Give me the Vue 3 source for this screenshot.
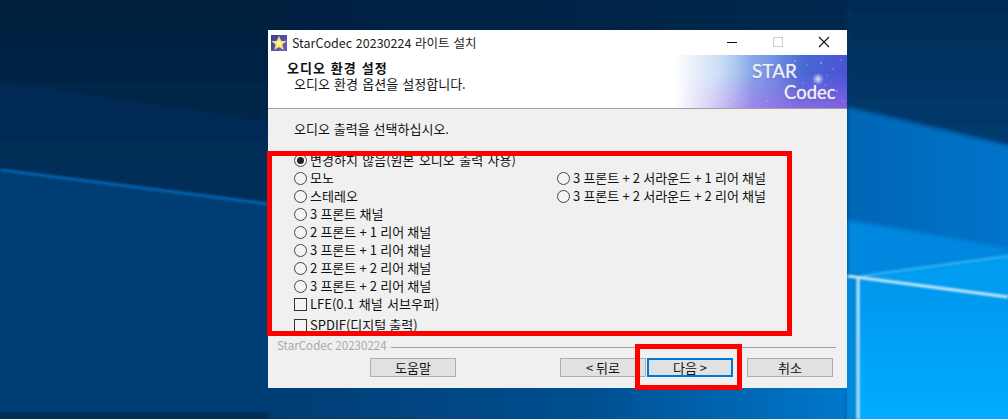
<template>
  <div class="desktop">
    <svg class="wallpaper" width="1008" height="419" viewBox="0 0 1008 419">
      <defs>
        <linearGradient id="leftTop" x1="0" y1="0" x2="0" y2="1">
          <stop offset="0" stop-color="#00203f" />
          <stop offset="1" stop-color="#002749" />
        </linearGradient>
        <linearGradient id="leftMid" x1="0" y1="0" x2="0" y2="1">
          <stop offset="0" stop-color="#002b54" />
          <stop offset="1" stop-color="#003564" />
        </linearGradient>
        <linearGradient id="rightTop" x1="0" y1="0" x2="0" y2="1">
          <stop offset="0" stop-color="#002a52" />
          <stop offset="1" stop-color="#005da8" />
        </linearGradient>
        <linearGradient id="rightMid" x1="0" y1="0" x2="1" y2="0">
          <stop offset="0" stop-color="#0066b4" />
          <stop offset="1" stop-color="#0074cc" />
        </linearGradient>
        <linearGradient id="pane" x1="0" y1="0" x2="0" y2="1">
          <stop offset="0" stop-color="#0096ec" />
          <stop offset="1" stop-color="#00acfe" />
        </linearGradient>
        <linearGradient id="bottom" x1="0" y1="0" x2="1" y2="0">
          <stop offset="0" stop-color="#003c74" />
          <stop offset="0.55" stop-color="#004f90" />
          <stop offset="1" stop-color="#0078cc" />
        </linearGradient>
        <linearGradient id="top" x1="0" y1="0" x2="1" y2="0">
          <stop offset="0" stop-color="#002040" />
          <stop offset="1" stop-color="#00284e" />
        </linearGradient>
        <filter id="soft"><feGaussianBlur stdDeviation="1" /></filter>
        <filter id="softer"><feGaussianBlur stdDeviation="2" /></filter>
      </defs>
      <rect width="1008" height="419" fill="#003a70" />
      <g filter="url(#softer)">
        <rect x="-10" y="-10" width="290" height="140" fill="url(#leftTop)" />
        <polygon points="-10,80 280,124 280,430 -10,430" fill="url(#leftMid)" />
        <polygon points="-10,170 280,205 280,430 -10,430" fill="#003c74" />
      </g>
      <rect y="412" width="268" height="7" fill="#002f58" />
      <rect x="268" y="0" width="580" height="30" fill="url(#top)" />
      <rect x="268" y="388" width="580" height="31" fill="url(#bottom)" />
      <g filter="url(#softer)">
        <rect x="847" y="-10" width="171" height="440" fill="url(#rightTop)" />
        <polygon points="847,107 1018,148 1018,252 847,220" fill="url(#rightMid)" />
        <polygon points="847,220 1018,250 1018,298 860,276 847,275" fill="#0088e0" />
      </g>
      <polygon points="847,275 858,276 858,419 847,419" fill="#0088dc" />
      <polygon points="858,276 1008,297 1008,419 858,419" fill="url(#pane)" />
      <polygon points="860,276 1008,256 1008,297" fill="#009cf0" />
      <g filter="url(#soft)">
        <polyline points="0,170 268,204" fill="none" stroke="#0064b0" stroke-width="3" />
        <polyline points="848,276 1008,297" fill="none" stroke="#c4eafc" stroke-width="3" />
        <polyline points="858,276 858,419" fill="none" stroke="#c4eafc" stroke-width="3" />
        <polyline points="860,276 1008,256" fill="none" stroke="#38b4f4" stroke-width="2" />
      </g>
    </svg>

    <div class="installer">
      <div class="titlebar">
        <svg class="app-icon" width="16" height="16" viewBox="0 0 16 16">
          <defs>
            <linearGradient id="iconBg" x1="0" y1="0" x2="1" y2="1">
              <stop offset="0" stop-color="#2c3f9c" />
              <stop offset="1" stop-color="#7a5cc0" />
            </linearGradient>
          </defs>
          <rect width="16" height="16" fill="url(#iconBg)" />
          <polygon points="8,0.8 10.2,5.8 15.6,6.2 11.4,9.6 12.8,15 8,12.2 3.2,15 4.6,9.6 0.4,6.2 5.8,5.8" fill="#f6dc5c" />
          <polygon points="8,4 9.2,7 12,7.4 9.8,9.2 10.4,12 8,10.6 5.6,12 6.2,9.2 4,7.4 6.8,7" fill="#fdf2a8" />
        </svg>
        <span class="title">StarCodec 20230224 라이트 설치</span>
        <div class="win-buttons">
          <svg width="46" height="25" viewBox="0 0 46 25"><rect x="18" y="12" width="10" height="1" fill="#111" /></svg>
          <svg width="46" height="25" viewBox="0 0 46 25"><rect x="18.5" y="7.5" width="9" height="9" fill="none" stroke="#ccc" /></svg>
          <svg width="46" height="25" viewBox="0 0 46 25"><path d="M18 7l10 10M28 7L18 17" stroke="#111" fill="none" stroke-width="1.1" /></svg>
        </div>
      </div>

      <div class="header">
        <div class="header-text">
          <b>오디오 환경 설정</b>
          <span>오디오 환경 옵션을 설정합니다.</span>
        </div>
        <div class="banner">
          <svg class="stars" width="172" height="53" viewBox="0 0 172 53">
            <defs>
              <radialGradient id="glow">
                <stop offset="0" stop-color="#fff" stop-opacity=".8" />
                <stop offset="1" stop-color="#fff" stop-opacity="0" />
              </radialGradient>
            </defs>
            <circle cx="143" cy="24" r="6" fill="url(#glow)" />
            <circle v-for="s in stars" :key="s[0] + '-' + s[1]" :cx="s[0]" :cy="s[1]" :r="s[2]" fill="#fff" opacity=".7" />
          </svg>
          <span class="logo-star">STAR</span>
          <span class="logo-codec">Codec</span>
        </div>
      </div>

      <div class="body">
        <p class="prompt">오디오 출력을 선택하십시오.</p>
        <div class="options">
          <div class="col-left">
            <label v-for="(o, i) in leftRadios" :key="o" class="opt" :class="{ wide: i === 0 }">
              <span class="radio" :class="{ on: i === 0 }"></span>{{ o }}
            </label>
            <label class="opt wide"><span class="check"></span>LFE(0.1 채널 서브우퍼)</label>
            <label class="opt spdif"><span class="check"></span>SPDIF(디지털 출력)</label>
          </div>
          <div class="col-right">
            <label v-for="o in rightRadios" :key="o" class="opt">
              <span class="radio"></span>{{ o }}
            </label>
          </div>
        </div>
      </div>

      <div class="brand-row">
        <span class="brand">StarCodec 20230224</span>
        <span class="rule"></span>
      </div>
      <div class="actions">
        <button class="btn help">도움말</button>
        <button class="btn back">&lt; 뒤로</button>
        <button class="btn next">다음 &gt;</button>
        <button class="btn cancel">취소</button>
      </div>
    </div>

    <div class="mark mark-options"></div>
    <div class="mark mark-next"></div>
  </div>
</template>

<script setup>
const leftRadios = [
  "변경하지 않음(원본 오디오 출력 사용)",
  "모노",
  "스테레오",
  "3 프론트 채널",
  "2 프론트 + 1 리어 채널",
  "3 프론트 + 1 리어 채널",
  "2 프론트 + 2 리어 채널",
  "3 프론트 + 2 리어 채널",
];

const rightRadios = [
  "3 프론트 + 2 서라운드 + 1 리어 채널",
  "3 프론트 + 2 서라운드 + 2 리어 채널",
];

// x, y, r inside the banner
const stars = [
  [120, 6, 0.7], [132, 10, 0.6], [146, 8, 0.8], [158, 14, 0.6], [166, 5, 0.6],
  [150, 30, 0.5], [128, 28, 0.5], [162, 36, 0.7], [110, 36, 0.5],
  [60, 44, 0.6], [92, 46, 0.5], [168, 46, 0.6], [118, 18, 0.5], [152, 20, 0.5],
];
</script>

<style scoped>
.desktop {
  position: relative;
  width: 1008px;
  height: 419px;
  overflow: hidden;
  font-family: "Noto Sans CJK KR", "Noto Sans", sans-serif;
  font-size: 13px;
  color: #111;
}

.wallpaper {
  position: absolute;
  left: 0;
  top: 0;
}

.installer {
  position: absolute;
  left: 268px;
  top: 30px;
  width: 579px;
  height: 358px;
  background: #f0f0f0;
  display: flex;
  flex-direction: column;
}

.titlebar {
  height: 25px;
  background: #fff;
  display: flex;
  align-items: center;
  padding-left: 3px;
  flex-shrink: 0;
}

.app-icon {
  margin-right: 5px;
}

.title {
  font-size: 12.5px;
  color: #222;
  word-spacing: 1px;
}

.win-buttons {
  margin-left: auto;
  display: flex;
  height: 25px;
}

.header {
  height: 53px;
  background: #fff;
  border-bottom: 1px solid #a0a0a0;
  display: flex;
  justify-content: space-between;
  flex-shrink: 0;
}

.header-text {
  display: flex;
  flex-direction: column;
  padding: 5px 0 0 19px;
  line-height: 16px;
}

.header-text b {
  font-weight: 700;
  letter-spacing: 1px;
  word-spacing: 1px;
}

.header-text span {
  padding-left: 7px;
  word-spacing: 1.3px;
}

.banner {
  position: relative;
  width: 172px;
  height: 53px;
  background:
    linear-gradient(90deg, #fff 0%, rgba(255, 255, 255, 0) 45%),
    linear-gradient(180deg, rgba(180, 110, 240, 0) 35%, rgba(180, 110, 240, 0.55) 100%),
    linear-gradient(100deg, #a4c6f0 25%, #7c9ce6 50%, #4a68d4 72%, #4a50d6 100%);
  color: #eeeef8;
  font-family: Lato, "Open Sans", sans-serif;
  text-shadow: 0 0 1px rgba(235, 235, 250, 0.9), 0 1px 2px rgba(60, 60, 120, 0.4);
}

.stars {
  position: absolute;
  left: 0;
  top: 0;
}

.logo-star {
  position: absolute;
  left: 77px;
  top: 4px;
  font-size: 19px;
  line-height: 24px;
}

.logo-codec {
  position: absolute;
  left: 109px;
  top: 25px;
  font-size: 18.5px;
  line-height: 24px;
}

.body {
  flex: 1;
  padding: 11px 0 0 26px;
}

.prompt {
  margin: 0;
  height: 18px;
  line-height: 18px;
  word-spacing: 1px;
}

.options {
  display: flex;
  margin-top: 13px;
}

.col-left {
  width: 263px;
  display: flex;
  flex-direction: column;
}

.col-right {
  display: flex;
  flex-direction: column;
  padding-top: 18px;
}

.opt {
  display: flex;
  align-items: center;
  height: 18px;
  line-height: 18px;
  white-space: pre;
  color: #111;
  word-spacing: 0.25px;
}

.opt.wide {
  word-spacing: 1.5px;
}

.spdif {
  margin-top: 3px;
}

.radio {
  width: 13px;
  height: 13px;
  box-sizing: border-box;
  border: 1px solid #444;
  border-radius: 50%;
  background: #f4f4f4;
  margin-right: 3px;
  flex-shrink: 0;
  display: flex;
  align-items: center;
  justify-content: center;
}

.radio.on::after {
  content: "";
  width: 7px;
  height: 7px;
  border-radius: 50%;
  background: #222;
}

.check {
  width: 13px;
  height: 13px;
  box-sizing: border-box;
  border: 1px solid #333;
  background: #f4f4f4;
  margin-right: 3px;
  flex-shrink: 0;
}

.brand-row {
  display: flex;
  align-items: center;
  height: 16px;
  padding: 0 11px 0 9px;
  flex-shrink: 0;
}

.brand {
  font-size: 11.6px;
  color: #a8a8a8;
  line-height: 16px;
}

.rule {
  flex: 1;
  height: 1px;
  background: #a0a0a0;
  margin: 5px 0 0 4px;
}

.actions {
  position: relative;
  display: flex;
  height: 19px;
  margin: 5px 0 11px;
  padding-left: 102px;
  flex-shrink: 0;
}

.btn {
  width: 86px;
  height: 19px;
  box-sizing: border-box;
  border: 1px solid #adadad;
  background: #e1e1e1;
  font: inherit;
  line-height: 15px;
  padding: 0;
  color: #111;
}

.back {
  margin-left: 104px;
}

.next {
  margin-left: 1px;
  border: 2px solid #0078d7;
}

.cancel {
  margin-left: 14px;
}

.mark {
  position: absolute;
  box-sizing: border-box;
  border: 5px solid #ff0000;
}

.mark-options {
  left: 267px;
  top: 151px;
  width: 525px;
  height: 185px;
}

.mark-next {
  left: 635px;
  top: 344px;
  width: 107px;
  height: 46px;
}
</style>
